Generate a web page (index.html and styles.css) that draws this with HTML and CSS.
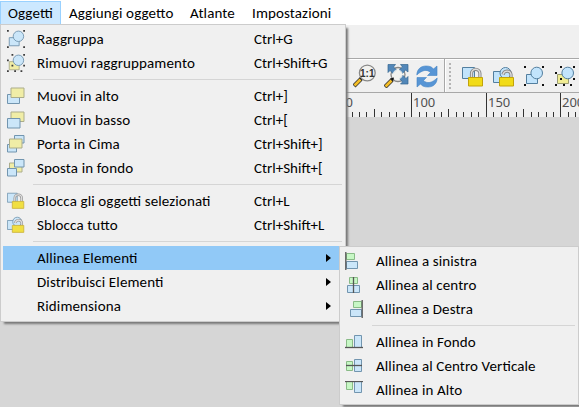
FILE: index.html
```html
<!DOCTYPE html>
<html lang="it">
<head>
<meta charset="utf-8">
<title>Oggetti</title>
<link rel="stylesheet" href="styles.css">
</head>
<body>
<svg class="defs" aria-hidden="true">
  <symbol id="group" viewBox="0 0 20 20">
    <path d="M2.5 8.5h11v9h-11z" class="blue"/><circle cx="12.7" cy="7" r="5.8" class="blue"/>
    <path d="M0 0h2v2H0zM18 0h2v2h-2zM0 18h2v2H0zM18 18h2v2h-2z" class="ink"/>
  </symbol>
  <symbol id="ungroup" viewBox="0 0 20 20">
    <path d="M2.5 8.5h11v9h-11z" class="yellow"/><circle cx="12.7" cy="7" r="5.8" class="blue"/>
    <path d="M5 0h2v2H5zM18 0h2v2h-2zM0 6h2v2H0zM18 12h2v2h-2zM5 12h2v2H5zM0 18h2v2H0zM8 18h2v2H8zM15 18h2v2h-2z" class="ink"/>
  </symbol>
  <symbol id="raise" viewBox="0 0 18 18"><path d="M.5 7.5h12v9H.5z" class="blue"/><path d="M4 1h13v9.500H4z" class="yellow"/></symbol>
  <symbol id="lower" viewBox="0 0 18 18"><path d="M4 1h13v9.500H4z" class="yellow"/><path d="M.5 7.500h12.500v9.500H.5z" class="blue"/></symbol>
  <symbol id="front" viewBox="0 0 18 18"><path d="M7.500 .5h9.500v7.500h-9.500zM.5 9.500h9v7.500h-9z" class="blue"/><path d="M2.500 4h12.500v9h-12.500z" class="yellow"/></symbol>
  <symbol id="back" viewBox="0 0 18 18"><path d="M2.500 4h12.500v9h-12.500z" class="yellow"/><path d="M7.500 .5h9.500v7.500h-9.500zM.5 9.500h9v7.500h-9z" class="blue"/></symbol>
  <symbol id="lock" viewBox="0 0 22 20">
    <path d="M.5 .5h12v11H.5z" class="blue"/>
    <path d="M9.500 11V6.500a4.200 4.200 0 0 1 8.400 0V11" class="shackle"/><path d="M9.500 11V6.500a4.200 4.200 0 0 1 8.400 0V11" class="shine"/>
    <path d="M6.500 10.500h14v8.500h-14z" class="gold"/>
  </symbol>
  <symbol id="unlock" viewBox="0 0 22 20">
    <path d="M.5 4.500h10v11H.5z" class="blue"/><circle cx="12.500" cy="6" r="5.500" class="blue"/>
    <path d="M10 7.500c1-4 7-5 8 0V11" class="shackle"/><path d="M10 7.500c1-4 7-5 8 0V11" class="shine"/>
    <path d="M6.500 10.500h14v8.500h-14z" class="gold"/>
  </symbol>
  <symbol id="left" viewBox="0 0 18 18"><path d="M1.500 1.500h8v6h-8z" class="green"/><path d="M1.500 9.500h11v7h-11z" class="blue"/><path d="M.8 0v18" class="axis"/></symbol>
  <symbol id="center" viewBox="0 0 18 18"><path d="M4.500 1.500h8v6h-8z" class="green"/><path d="M2.500 9.500h12v7h-12z" class="blue"/><path d="M8.500 1v16" class="axis"/></symbol>
  <symbol id="right" viewBox="0 0 18 18"><path d="M8.500 1.500h8v6h-8z" class="green"/><path d="M5.500 9.500h11v7h-11z" class="blue"/><path d="M17.200 0v18" class="axis"/></symbol>
  <symbol id="bottom" viewBox="0 0 18 18"><path d="M1.500 6.500h6v8h-6z" class="green"/><path d="M9.500 2.500h7v12h-7z" class="blue"/><path d="M0 14.500h18" class="axis"/></symbol>
  <symbol id="middle" viewBox="0 0 18 18"><path d="M1.500 4.500h6v9h-6z" class="green"/><path d="M9.500 2.500h7v12h-7z" class="blue"/><path d="M1 8.500h16" class="axis"/></symbol>
  <symbol id="top" viewBox="0 0 18 18"><path d="M1.500 .5h6v8h-6z" class="green"/><path d="M9.500 .5h7v11h-7z" class="blue"/><path d="M0 .5h18" class="axis"/></symbol>
</svg>

<nav class="menubar">
  <span class="tab active w-ogg"><b>Oggetti</b></span>
  <span class="tab w-agg"><b>Aggiungi oggetto</b></span>
  <span class="tab w-atl"><b>Atlante</b></span>
  <span class="tab w-imp"><b>Impostazioni</b></span>
</nav>
<div class="strip"></div>
<div class="toolbar">
  <svg class="zoom-one" width="23" height="24" viewBox="0 0 23 24">
    <path d="M1 22l7-7" class="handle-edge"/><path d="M1.500 21.500l6-6" class="handle"/><path d="M6 13.500l3 3 1-3z" class="ink"/>
    <circle cx="14.300" cy="9" r="7.900" class="lens"/><text x="14.300" y="12.500" class="ratio">1:1</text>
  </svg>
  <svg class="zoom-full" width="25" height="24" viewBox="0 0 25 24">
    <circle cx="14" cy="10.500" r="7" class="lens"/>
    <path d="M4 .5h7.500L9.500 3l3 3-3.500 3.500-3-3-2 2zM16.500 .5H24v7.500l-2.500-2-3 3.500L15 6l3.500-3zM24 12.500V20h-7.500l2-2-3-3.500 3-3.500 3.500 3.500z" class="arrow"/>
    <circle cx="13.700" cy="10.500" r="5" class="glass"/>
    <path d="M1 23l7-7" class="handle-edge"/><path d="M1.500 22.500l6-6" class="handle"/><path d="M6 14.500l3 3 1-4z" class="ink"/>
  </svg>
  <svg class="refresh" width="22" height="23" viewBox="0 0 22 23">
    <path d="M.8 10C1 4 5 1 10 1c4 0 6 1 7.500 3L21 1v9.500h-9.500l3-3C11 4 6 5 .8 10z" class="turn"/>
    <path d="M21.200 13C21 19 17 22 12 22c-4 0-6-1-7.500-3L1 22v-9.500h9.500l-3 3C11 19 16 18 21.200 13z" class="turn"/>
  </svg>
  <span class="divider"></span><span class="grip"></span>
  <svg class="t-lock" width="22" height="20"><use href="#lock"/></svg>
  <svg class="t-unlock" width="22" height="20"><use href="#unlock"/></svg>
  <svg class="t-group" width="20" height="20"><use href="#group"/></svg>
  <svg class="t-ungroup" width="20" height="20"><use href="#ungroup"/></svg>
</div>
<svg class="ruler" width="579" height="24" viewBox="0 0 579 24">
  <path class="ticks" d="M352.500 19v5M359.500 19v5M366.500 19v5M374.500 16v8M381.500 19v5M389.500 19v5M396.500 19v5M404.500 19v5M411.500 0v24M419.500 19v5M426.500 19v5M434.500 19v5M441.500 19v5M448.500 16v8M456.500 19v5M463.500 19v5M471.500 19v5M478.500 19v5M486.500 0v24M493.500 19v5M501.500 19v5M508.500 19v5M516.500 19v5M523.500 16v8M531.500 19v5M538.500 19v5M546.500 19v5M553.500 19v5M560.500 0v24M568.500 19v5M575.500 19v5"/>
  <text x="345.500" y="14">0</text><text x="413" y="14">100</text><text x="488" y="14">150</text><text x="562" y="14">200</text>
</svg>
<main class="canvas"></main>

<div class="menu main-menu">
  <div class="row"><svg class="icon"><use href="#group"/></svg><span>Raggruppa</span><kbd>Ctrl+G</kbd></div>
  <div class="row"><svg class="icon"><use href="#ungroup"/></svg><span>Rimuovi raggruppamento</span><kbd>Ctrl+Shift+G</kbd></div>
  <hr>
  <div class="row"><svg class="icon"><use href="#raise"/></svg><span>Muovi in alto</span><kbd>Ctrl+]</kbd></div>
  <div class="row"><svg class="icon"><use href="#lower"/></svg><span>Muovi in basso</span><kbd>Ctrl+[</kbd></div>
  <div class="row"><svg class="icon"><use href="#front"/></svg><span>Porta in Cima</span><kbd>Ctrl+Shift+]</kbd></div>
  <div class="row"><svg class="icon"><use href="#back"/></svg><span>Sposta in fondo</span><kbd>Ctrl+Shift+[</kbd></div>
  <hr>
  <div class="row"><svg class="icon"><use href="#lock"/></svg><span>Blocca gli oggetti selezionati</span><kbd>Ctrl+L</kbd></div>
  <div class="row"><svg class="icon"><use href="#unlock"/></svg><span>Sblocca tutto</span><kbd>Ctrl+Shift+L</kbd></div>
  <hr>
  <div class="row selected"><i class="icon"></i><span>Allinea Elementi</span><i class="caret"></i></div>
  <div class="row"><i class="icon"></i><span>Distribuisci Elementi</span><i class="caret"></i></div>
  <div class="row"><i class="icon"></i><span>Ridimensiona</span><i class="caret"></i></div>
</div>

<div class="menu submenu">
  <div class="row"><svg class="icon"><use href="#left"/></svg><span>Allinea a sinistra</span></div>
  <div class="row"><svg class="icon"><use href="#center"/></svg><span>Allinea al centro</span></div>
  <div class="row"><svg class="icon"><use href="#right"/></svg><span>Allinea a Destra</span></div>
  <hr>
  <div class="row"><svg class="icon"><use href="#bottom"/></svg><span>Allinea in Fondo</span></div>
  <div class="row"><svg class="icon"><use href="#middle"/></svg><span>Allinea al Centro Verticale</span></div>
  <div class="row"><svg class="icon"><use href="#top"/></svg><span>Allinea in Alto</span></div>
</div>
</body>
</html>
```
FILE: styles.css
```css
* { box-sizing: border-box; }
body {
  margin: 0; width: 579px; height: 407px; overflow: hidden;
  display: flex; flex-direction: column; position: relative;
  background: #d6d6d6; color: #000;
  font: 15px/24px Carlito, Lato, "Open Sans", sans-serif;
}
.defs { position: absolute; width: 0; height: 0; }
.menubar { height: 25px; background: #fff; display: flex; padding-top: 1px; flex: none; }
.tab { height: 24px; padding-left: 7px; border: 1px solid transparent; line-height: 23px; white-space: nowrap; }
.tab b { font-weight: 400; }
.tab b, .row span { letter-spacing: .12px; font-feature-settings: "liga" 1, "clig" 1; }
.tab.active { background: #cce8ff; border-color: #99d1ff; }
.w-ogg { width: 61px; }
.w-agg { width: 121px; }
.w-atl { width: 62px; }
.w-imp { width: 96px; }
.strip { height: 33px; flex: none; background: #f0f0f0; }
.toolbar {
  height: 35px; flex: none; background: #f0f0f0; display: flex; align-items: flex-start;
  border-top: 1px solid #a8a8a8; border-bottom: 1px solid #a8a8a8; box-shadow: inset 0 1px #fff;
  padding: 5px 0 0 353px;
}
.toolbar svg { flex: none; }
.zoom-full { margin-left: 8px; }
.refresh { margin: 1px 0 0 7px; }
.divider { width: 2px; height: 33px; margin: -5px 0 0 6px; background: linear-gradient(90deg, #a8a8a8 50%, #fff 50%); }
.grip { width: 2px; height: 26px; margin: -1px 0 0 3px; background: repeating-linear-gradient(#b4b4b4 0 2px, transparent 2px 4px); }
.t-lock { margin: 3px 0 0 11px; }
.t-unlock { margin: 3px 0 0 9px; }
.t-group { margin: 2px 0 0 9px; }
.t-ungroup { margin: 2px 0 0 11px; }
.ruler { flex: none; background: #f0f0f0; font: 13px "Noto Sans", sans-serif; fill: #505050; }
.ticks { stroke: #333; fill: none; }
.canvas { flex: 1; background: #d6d6d6; }

.menu { position: absolute; background: #f0f0f0; border: 1px solid #ccc; }
.main-menu { left: 0; top: 24px; width: 346px; height: 298px; padding: 2px; box-shadow: 3px 3px 2px -1px #777; }
.submenu { left: 339px; top: 246px; width: 240px; height: 159px; padding: 2px; box-shadow: 3px 3px 2px -1px #777; }
.row { height: 24px; display: flex; align-items: center; white-space: nowrap; }
.selected { background: #91c9f7; width: 336px; }
.icon { width: 18px; height: 18px; margin: 0 12px 0 4px; flex: none; opacity: .8; }
.submenu .icon { margin: 0 13px 0 3px; }
.row span { flex: 1; }
.row kbd { font: inherit; width: 89px; }
.caret { width: 5px; height: 8px; background: #000; clip-path: polygon(0 0, 100% 50%, 0 100%); margin-right: 12px; }
.selected .caret { margin-right: 8px; }
hr { height: 9px; margin: 0 1px 0 30px; border: 0; background: linear-gradient(#d5d5d5, #d5d5d5) 0 4px / 100% 1px no-repeat; }

.blue { fill: #c2e4fc; stroke: #537f9f; }
.yellow { fill: #f1ed94; stroke: #9b9d73; }
.green { fill: #bdf9bb; stroke: #70af6e; }
.ink { fill: #111; }
.axis { stroke: #303030; stroke-width: 1.3; fill: none; }
.shackle { stroke: #858585; stroke-width: 3.2; fill: none; }
.shine { stroke: #ddd; stroke-width: 1.4; fill: none; }
.gold { fill: #f1db17; stroke: #c2a30b; }
.lens { fill: #f2f2ef; stroke: #888; stroke-width: 1.3; }
.glass { fill: #f2f2ef; opacity: .85; }
.handle-edge { stroke: #333; stroke-width: 4.2; }
.handle { stroke: #f4bd25; stroke-width: 2.6; }
.ratio { font: bold 10px "Liberation Sans", sans-serif; text-anchor: middle; fill: #333; }
.arrow { fill: #5287b9; stroke: #34658f; stroke-width: .7; }
.turn { fill: #5795d5; stroke: #4484c4; stroke-width: .6; }
```
